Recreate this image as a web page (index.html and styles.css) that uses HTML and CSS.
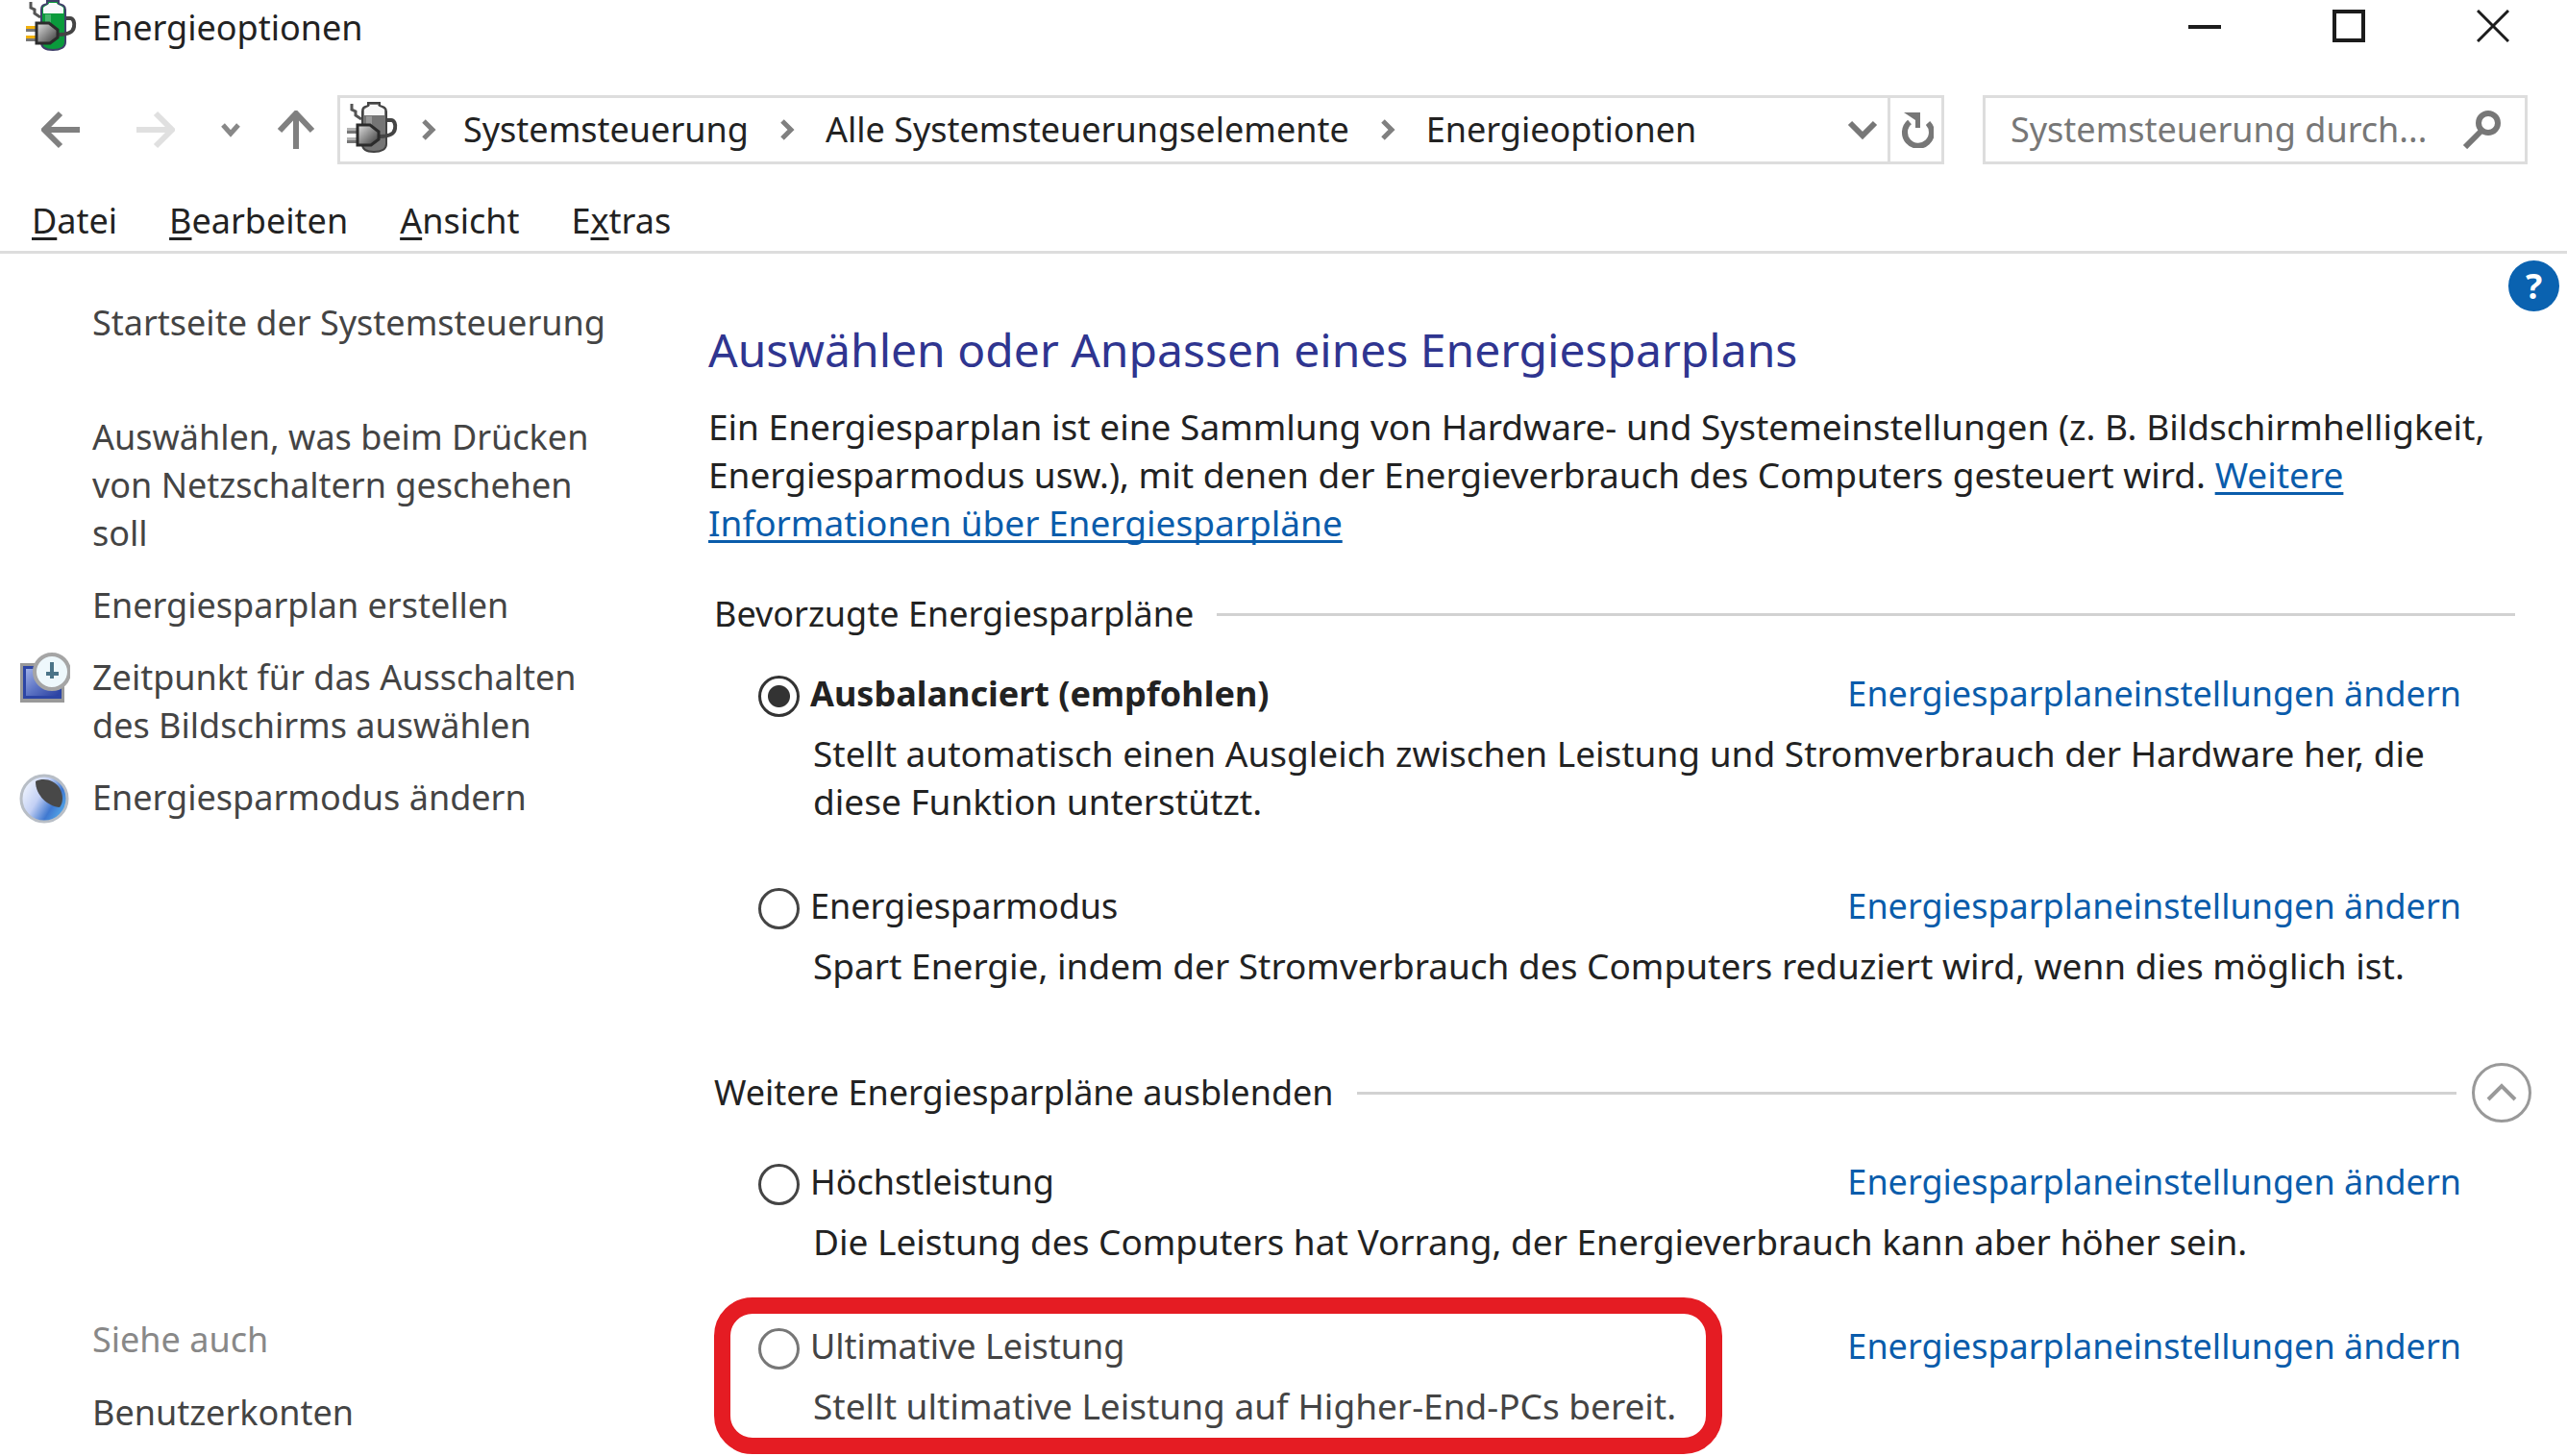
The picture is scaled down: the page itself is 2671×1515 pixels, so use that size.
FILE: index.html
```html
<!DOCTYPE html>
<html lang="de">
<head>
    <meta charset="UTF-8">
    <meta name="viewport" content="width=device-width, initial-scale=1.0">
    <title>Energieoptionen</title>
    <link rel="stylesheet" href="styles.css">
</head>
<body>
    <!-- shared icons -->
    <svg class="sprite" aria-hidden="true">
      <defs>
        <linearGradient id="plugShade" x1="0" y1="0" x2="1" y2="1">
          <stop offset="0" stop-color="#e4e4e4"/>
          <stop offset="0.5" stop-color="#8c8c8c"/>
          <stop offset="1" stop-color="#333"/>
        </linearGradient>
        <linearGradient id="screenShade" x1="0" y1="0" x2="1" y2="1">
          <stop offset="0" stop-color="#9fb0e6"/>
          <stop offset="0.5" stop-color="#5d74c4"/>
          <stop offset="1" stop-color="#2a40a0"/>
        </linearGradient>
        <linearGradient id="moonShade" x1="0" y1="0.2" x2="1" y2="0.8">
          <stop offset="0" stop-color="#f4f8ff"/>
          <stop offset="0.4" stop-color="#c3d0f4"/>
          <stop offset="0.7" stop-color="#3f78d0"/>
          <stop offset="1" stop-color="#58b4f0"/>
        </linearGradient>
      </defs>
      <symbol id="battery" viewBox="0 0 53 53">
        <path d="M5 2v6l4 2v4l6 4" fill="none" stroke="#555" stroke-width="3"/>
        <path d="M16 10c0-5 3-5 6-6V1h12v3c4 1 7 2 7 6v34c0 5-5 8-13 8s-12-3-12-8z" class="cell"/>
        <path d="M18 8c3-3 6-3 6-5h8c0 2 4 2 7 5v6H18z" fill="#f8f8fc"/>
        <path d="M20 15h6v30h-6z" fill="#fff" opacity="0.25"/>
        <path d="M34 36c8 0 15-2 16-8 1-5-1-9-4-9h-4" fill="none" stroke="#444" stroke-width="4"/>
        <path d="M0 27h11v3H0zM0 37h11v3H0z" class="prong"/>
        <path d="M0 30h11v3H0zM0 40h11v3H0z" fill="#777"/>
        <path d="M11 24h13l9 7v8l-8 6H11z" fill="url(#plugShade)" stroke="#2b2b2b" stroke-width="3"/>
      </symbol>
      <symbol id="chevron-right" viewBox="0 0 16 24">
        <path d="M3 3l9 9-9 9" fill="none" stroke="#808080" stroke-width="5"/>
      </symbol>
    </svg>

    <div class="window">
      <header class="titlebar">
        <svg class="app-icon"><use href="#battery"/></svg>
        <h1>Energieoptionen</h1>
        <div class="window-buttons">
          <button type="button" aria-label="Minimieren"><svg width="34" height="34"><path d="M0 18h34" stroke="#1c1c1c" stroke-width="4"/></svg></button>
          <button type="button" aria-label="Maximieren"><svg width="34" height="34"><path d="M2 2h30v30H2z" fill="none" stroke="#1c1c1c" stroke-width="4"/></svg></button>
          <button type="button" aria-label="Schließen"><svg width="34" height="34"><path d="M1 1l32 32M33 1L1 33" stroke="#1c1c1c" stroke-width="3"/></svg></button>
        </div>
      </header>

      <nav class="navbar">
        <div class="nav-buttons">
          <button type="button" class="back" aria-label="Zurück"><svg width="40" height="40"><path d="M2 20h38M20 3L3 20l17 17" fill="none" stroke="#808080" stroke-width="6"/></svg></button>
          <button type="button" class="forward" aria-label="Vorwärts"><svg width="40" height="40"><path d="M0 20h38M20 3l17 17-17 17" fill="none" stroke="#e0e0e0" stroke-width="6"/></svg></button>
          <button type="button" class="recent" aria-label="Zuletzt besucht"><svg width="20" height="16"><path d="M2 3l8 9 8-9" fill="none" stroke="#888" stroke-width="5"/></svg></button>
          <button type="button" class="up" aria-label="Nach oben"><svg width="40" height="40"><path d="M20 40V3M3 21L20 3l17 18" fill="none" stroke="#808080" stroke-width="6"/></svg></button>
        </div>
        <div class="address">
          <svg class="app-icon gray"><use href="#battery"/></svg>
          <svg class="crumb-arrow"><use href="#chevron-right"/></svg>
          <a href="#">Systemsteuerung</a>
          <svg class="crumb-arrow"><use href="#chevron-right"/></svg>
          <a href="#">Alle Systemsteuerungselemente</a>
          <svg class="crumb-arrow"><use href="#chevron-right"/></svg>
          <a href="#">Energieoptionen</a>
          <button type="button" class="history" aria-label="Vorherige Orte"><svg width="32" height="24"><path d="M3 5l13 13L29 5" fill="none" stroke="#777" stroke-width="6"/></svg></button>
          <button type="button" class="refresh" aria-label="Aktualisieren"><svg width="34" height="38"><path d="M28 12a14 14 0 1 1-19 -1" fill="none" stroke="#777" stroke-width="6"/><path d="M3 1h17v16h-5V9z" fill="#777"/></svg></button>
        </div>
        <form class="search">
          <input type="text" placeholder="Systemsteuerung durch..." aria-label="Systemsteuerung durchsuchen">
          <button type="button" aria-label="Suchen"><svg width="40" height="40"><circle cx="27" cy="13" r="10" fill="none" stroke="#777" stroke-width="6"/><path d="M20 21L3 38" stroke="#777" stroke-width="6"/></svg></button>
        </form>
      </nav>

      <div class="menubar">
        <button type="button"><u>D</u>atei</button>
        <button type="button"><u>B</u>earbeiten</button>
        <button type="button"><u>A</u>nsicht</button>
        <button type="button">E<u>x</u>tras</button>
      </div>

      <div class="content">
        <aside class="sidebar">
          <a href="#" class="home">Startseite der Systemsteuerung</a>
          <ul class="tasks">
            <li><a href="#">Auswählen, was beim Drücken von Netzschaltern geschehen soll</a></li>
            <li><a href="#">Energiesparplan erstellen</a></li>
            <li>
              <svg class="task-icon" viewBox="0 0 53 53">
                <path d="M1 11h46v41H1z" fill="#999"/>
                <path d="M4 14h40v34H4z" fill="#2c45a5"/>
                <path d="M7 17h34v28H7z" fill="url(#screenShade)"/>
                <circle cx="34" cy="20" r="18" fill="#eef8fc" stroke="#a5a5a5" stroke-width="4"/>
                <path d="M34 10v17M28 22h13" stroke="#4b7488" stroke-width="4"/>
              </svg>
              <a href="#">Zeitpunkt für das Ausschalten des Bildschirms auswählen</a>
            </li>
            <li>
              <svg class="task-icon" viewBox="0 0 53 53">
                <circle cx="26" cy="27" r="24" fill="url(#moonShade)" stroke="#b8bec6" stroke-width="3"/>
                <path d="M17 9c8-4 19-2 25 7 4 7 4 15 0 20-12-1-25-12-25-27z" fill="#484848"/>
              </svg>
              <a href="#">Energiesparmodus ändern</a>
            </li>
          </ul>
          <div class="see-also">
            <h2>Siehe auch</h2>
            <a href="#">Benutzerkonten</a>
          </div>
        </aside>

        <main>
          <button type="button" class="help" aria-label="Hilfe">?</button>
          <h2>Auswählen oder Anpassen eines Energiesparplans</h2>
          <p class="intro">Ein Energiesparplan ist eine Sammlung von Hardware- und Systemeinstellungen (z. B. Bildschirmhelligkeit, Energiesparmodus usw.), mit denen der Energieverbrauch des Computers gesteuert wird. <a href="#">Weitere Informationen über Energiesparpläne</a></p>

          <section class="preferred">
            <h3>Bevorzugte Energiesparpläne</h3>
            <div class="plan">
              <input type="radio" name="plan" id="balanced" checked>
              <label for="balanced">Ausbalanciert (empfohlen)</label>
              <a href="#">Energiesparplaneinstellungen ändern</a>
              <p>Stellt automatisch einen Ausgleich zwischen Leistung und Stromverbrauch der Hardware her, die diese Funktion unterstützt.</p>
            </div>
            <div class="plan">
              <input type="radio" name="plan" id="saver">
              <label for="saver">Energiesparmodus</label>
              <a href="#">Energiesparplaneinstellungen ändern</a>
              <p>Spart Energie, indem der Stromverbrauch des Computers reduziert wird, wenn dies möglich ist.</p>
            </div>
          </section>

          <section class="more">
            <div class="more-head">
              <h3>Weitere Energiesparpläne ausblenden</h3>
              <button type="button" class="collapse" aria-label="Ausblenden"><svg width="32" height="20"><path d="M2 17L16 3l14 14" fill="none" stroke="#999" stroke-width="4"/></svg></button>
            </div>
            <div class="plan">
              <input type="radio" name="plan" id="high">
              <label for="high">Höchstleistung</label>
              <a href="#">Energiesparplaneinstellungen ändern</a>
              <p>Die Leistung des Computers hat Vorrang, der Energieverbrauch kann aber höher sein.</p>
            </div>
            <div class="plan marked">
              <input type="radio" name="plan" id="ultimate">
              <label for="ultimate">Ultimative Leistung</label>
              <a href="#">Energiesparplaneinstellungen ändern</a>
              <p>Stellt ultimative Leistung auf Higher-End-PCs bereit.</p>
            </div>
          </section>
        </main>
      </div>
    </div>
</body>
</html>
```

FILE: styles.css
```css
* {
  box-sizing: border-box;
}

body {
  margin: 0;
  background: #fff;
  color: #222;
  font-family: "Noto Sans", "Open Sans", sans-serif;
  font-size: 36px;
  line-height: 50px;
}

h1, h2, h3, p, ul {
  margin: 0;
  padding: 0;
  font-size: inherit;
  font-weight: 400;
}

ul {
  list-style: none;
}

a {
  color: inherit;
  text-decoration: none;
}

button {
  display: flex;
  align-items: center;
  justify-content: center;
  margin: 0;
  padding: 0;
  border: none;
  background: none;
  color: inherit;
  font: inherit;
  cursor: pointer;
}

svg {
  display: block;
  flex: none;
}

.sprite {
  position: absolute;
  width: 0;
  height: 0;
}

.window {
  display: flex;
  flex-direction: column;
  min-height: 100vh;
}

.app-icon {
  width: 53px;
  height: 53px;
}

.cell {
  fill: #0a9a3c;
  stroke: #40406a;
  stroke-width: 2px;
}

.prong {
  fill: #f2b10c;
}

.gray {
  filter: grayscale(1);
}

/* title bar */
.titlebar {
  display: flex;
  align-items: center;
  height: 58px;
  padding-left: 27px;
}

.titlebar .app-icon {
  margin-bottom: 5px;
}

.titlebar h1 {
  margin-left: 16px;
}

.window-buttons {
  display: flex;
  align-self: flex-start;
  margin-left: auto;
  padding-right: 2px;
}

.window-buttons button {
  width: 150px;
  height: 54px;
}

/* navigation */
.navbar {
  display: flex;
  align-items: center;
  padding: 41px 41px 34px 43px;
}

.nav-buttons {
  display: flex;
  align-items: center;
  margin-right: 23px;
}

.forward {
  margin-left: 59px;
}

.recent {
  margin: 0 38px 0 48px;
}

.address {
  display: flex;
  flex: 1;
  align-items: center;
  height: 72px;
  padding-left: 7px;
  border: 3px solid #ddd;
}

.address .app-icon {
  margin-bottom: 5px;
}

.crumb-arrow {
  width: 16px;
  height: 24px;
  margin: 0 32px;
}

.address .app-icon + .crumb-arrow {
  margin: 0 28px 0 24px;
}

.history {
  width: 52px;
  height: 66px;
  margin-left: auto;
}

.refresh {
  width: 56px;
  height: 66px;
  padding-left: 3px;
  border-left: 3px solid #ddd;
}

.search {
  display: flex;
  align-items: center;
  width: 567px;
  height: 72px;
  margin-left: 40px;
  padding: 0 25px 0 26px;
  border: 3px solid #ddd;
}

.search input {
  flex: 1;
  min-width: 0;
  padding: 0;
  border: none;
  outline: none;
  font: inherit;
}

.search input::placeholder {
  color: #777;
  opacity: 1;
}

/* menu */
.menubar {
  display: flex;
  gap: 54px;
  padding: 0 33px 6px;
  border-bottom: 3px solid #ddd;
}

.menubar u {
  text-decoration-thickness: 3px;
  text-underline-offset: 4px;
}

/* content */
.content {
  display: flex;
  flex: 1;
}

.sidebar {
  display: flex;
  flex-direction: column;
  flex: none;
  width: 737px;
  padding: 47px 87px 20px 96px;
  color: #444;
}

.tasks {
  display: flex;
  flex-direction: column;
  gap: 25px;
  margin-top: 69px;
}

.tasks li {
  position: relative;
}

.task-icon {
  position: absolute;
  top: -1px;
  left: -76px;
  width: 53px;
  height: 53px;
}

.see-also {
  display: flex;
  flex-direction: column;
  gap: 26px;
  margin-top: auto;
}

.see-also h2 {
  color: #888;
}

main {
  position: relative;
  flex: 1;
  padding: 70px 37px 26px 0;
}

main h2 {
  color: #2f3590;
  font-size: 48px;
  line-height: 60px;
}

.help {
  position: absolute;
  top: 7px;
  right: 8px;
  width: 53px;
  height: 53px;
  border-radius: 50%;
  background: #0a62b0;
  color: #fff;
  font-weight: 700;
}

.intro {
  margin-top: 25px;
  font-size: 37px;
}

.intro a {
  color: #0a5cab;
  text-decoration: underline;
  text-decoration-thickness: 3px;
  text-underline-offset: 4px;
  text-decoration-skip-ink: none;
}

h3 {
  display: flex;
  flex: 1;
  align-items: center;
  gap: 24px;
  margin-left: 6px;
}

/* rule after the group title */
h3::after {
  content: "";
  flex: 1;
  height: 3px;
  background: #d2d2d2;
}

.preferred {
  margin-top: 45px;
}

.preferred h3 {
  margin-right: 17px;
  margin-bottom: 33px;
}

.more {
  margin-top: 76px;
}

.more-head {
  display: flex;
  align-items: center;
  gap: 16px;
  margin-bottom: 37px;
}

.collapse {
  width: 62px;
  height: 62px;
  border: 3px solid #999;
  border-radius: 50%;
}

.plan {
  display: grid;
  grid-template-columns: 54px 1fr auto;
  row-gap: 12px;
  padding: 0 73px 0 52px;
}

.plan + .plan {
  margin-top: 59px;
}

.plan input {
  appearance: none;
  width: 43px;
  height: 43px;
  margin: 6px 0 0;
  border: 3px solid #444;
  border-radius: 50%;
}

.plan input:checked {
  border-color: #333;
  background: radial-gradient(circle, #333 11px, #fff 12px);
}

.plan input:checked + label {
  font-weight: 700;
}

.plan > a {
  color: #0a5cab;
}

.plan p {
  grid-column: 2 / 4;
  padding-left: 3px;
  font-size: 37px;
}

.marked {
  color: #444;
}

.marked input {
  border-color: #777;
}

.marked p {
  position: relative;
  justify-self: start;
}

/* red frame round the marked plan */
.marked p::after {
  content: "";
  position: absolute;
  inset: -88px -48px -25px -100px;
  border: 17px solid #e51c23;
  border-radius: 40px;
  pointer-events: none;
}
```
